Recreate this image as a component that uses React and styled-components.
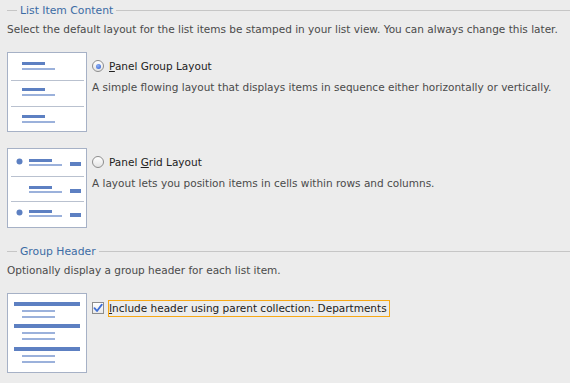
import React from "react";
import styled, { createGlobalStyle } from "styled-components";

const Global = createGlobalStyle`
  body {
    margin: 0;
    background: #ececec;
    font-family: "DejaVu Sans", "Liberation Sans", sans-serif;
  }
`;

const Page = styled.div`
  width: 570px;
  height: 383px;
  padding: 2px 0 0 7px;
  box-sizing: border-box;
  color: #4a4a4a;
  font-size: 10.5px;
`;

const Legend = styled.div`
  display: flex;
  align-items: center;
  gap: 3px;
  height: 16px;
  margin-top: ${({ top }) => top || 0}px;
  &::before {
    content: "";
    width: 10px;
    border-top: 1px solid #c6c6c6;
  }
  &::after {
    content: "";
    flex: 1;
    border-top: 1px solid #c6c6c6;
  }
`;

const LegendText = styled.span`
  color: #3b6ba4;
  font-size: 10.8px;
`;

const Note = styled.div`
  margin-top: 4px;
  height: 14px;
  line-height: 14px;
`;

const Option = styled.div`
  display: flex;
  gap: 5px;
  margin-top: ${({ top }) => top}px;
`;

const Thumb = styled.div`
  width: 80px;
  height: 80px;
  flex: none;
  box-sizing: border-box;
  border: 1px solid #a6b1c6;
  background: #fff;
  svg {
    display: block;
  }
`;

const OptionBody = styled.div`
  display: flex;
  flex-direction: column;
  padding-top: ${({ pad }) => pad}px;
`;

const ChoiceRow = styled.label`
  display: flex;
  align-items: center;
  gap: 5px;
  height: 14px;
  color: #222;
`;

const Radio = styled.span`
  width: 10px;
  height: 10px;
  border-radius: 50%;
  border: 1px solid #8d8d8d;
  background: linear-gradient(#ffffff, #e4e4e4);
  display: flex;
  align-items: center;
  justify-content: center;
  &::after {
    content: "";
    width: 5px;
    height: 5px;
    border-radius: 50%;
    background: radial-gradient(circle at 40% 35%, #8fb0f5, #2f5fd0);
    display: ${({ checked }) => (checked ? "block" : "none")};
  }
`;

const Check = styled.span`
  width: 10px;
  height: 10px;
  border: 1px solid #8d8d8d;
  background: linear-gradient(#ffffff, #e8e8e8);
  display: flex;
  align-items: center;
  justify-content: center;
`;

const Focus = styled.span`
  outline: 1px solid #f7a816;
  outline-offset: 0;
  padding: 1px 2px 1px 0;
  line-height: 13px;
`;

const Desc = styled.div`
  margin-top: 7px;
  line-height: 14px;
`;

const U = styled.span`
  text-decoration: underline;
`;

const Bar = ({ x, y, w, h, light }) => (
  <rect x={x} y={y} width={w} height={h} fill={light ? "#9bb1db" : "#5d80c2"} />
);

const Sep = ({ y }) => <line x1="3" y1={y + 0.5} x2="76" y2={y + 0.5} stroke="#b9c1cf" />;

const GroupThumb = () => (
  <svg width="78" height="78">
    {[0, 26, 53].map((o) => (
      <g key={o}>
        <Bar x={14} y={o + 9} w={23} h={3} />
        <Bar x={14} y={o + 15} w={33} h={2} light />
      </g>
    ))}
    <Sep y={27} />
    <Sep y={53} />
  </svg>
);

const GridThumb = () => (
  <svg width="78" height="78">
    {[0, 27, 51].map((o, i) => (
      <g key={o}>
        {i !== 1 && <circle cx={11.5} cy={o + 12.5} r={3} fill="#5d80c2" />}
        <Bar x={21} y={o + 10} w={23} h={3} />
        <Bar x={21} y={o + 15} w={33} h={2} light />
        <Bar x={62} y={o + 13} w={11} h={4} />
      </g>
    ))}
    <Sep y={27} />
    <Sep y={52} />
  </svg>
);

const HeaderThumb = () => (
  <svg width="78" height="78">
    {[0, 22, 45].map((o) => (
      <g key={o}>
        <Bar x={6} y={o + 8} w={66} h={4} />
        <Bar x={14} y={o + 16} w={33} h={2} light />
        <Bar x={14} y={o + 22} w={33} h={2} light />
      </g>
    ))}
  </svg>
);

const Tick = () => (
  <svg width="10" height="10" viewBox="0 0 10 10">
    <path d="M1.5 5.2 L4 8 L8.8 1.6" fill="none" stroke="#3f6fd6" strokeWidth="1.8" strokeLinecap="round" strokeLinejoin="round" />
  </svg>
);

export default function App() {
  return (
    <Page>
      <Global />
      <Legend>
        <LegendText>List Item Content</LegendText>
      </Legend>
      <Note>
        Select the default layout for the list items be stamped in your list view. You can always change this later.
      </Note>
      <Option top={16}>
        <Thumb>
          <GroupThumb />
        </Thumb>
        <OptionBody pad={7}>
          <ChoiceRow>
            <Radio checked />
            <span>
              <U>P</U>anel Group Layout
            </span>
          </ChoiceRow>
          <Desc>A simple flowing layout that displays items in sequence either horizontally or vertically.</Desc>
        </OptionBody>
      </Option>
      <Option top={16}>
        <Thumb>
          <GridThumb />
        </Thumb>
        <OptionBody pad={7}>
          <ChoiceRow>
            <Radio />
            <span>
              Panel <U>G</U>rid Layout
            </span>
          </ChoiceRow>
          <Desc>A layout lets you position items in cells within rows and columns.</Desc>
        </OptionBody>
      </Option>
      <Legend top={15}>
        <LegendText>Group Header</LegendText>
      </Legend>
      <Note>Optionally display a group header for each list item.</Note>
      <Option top={16}>
        <Thumb>
          <HeaderThumb />
        </Thumb>
        <OptionBody pad={8}>
          <ChoiceRow>
            <Check>
              <Tick />
            </Check>
            <Focus>
              <U>I</U>nclude header using parent collection: Departments
            </Focus>
          </ChoiceRow>
        </OptionBody>
      </Option>
    </Page>
  );
}
